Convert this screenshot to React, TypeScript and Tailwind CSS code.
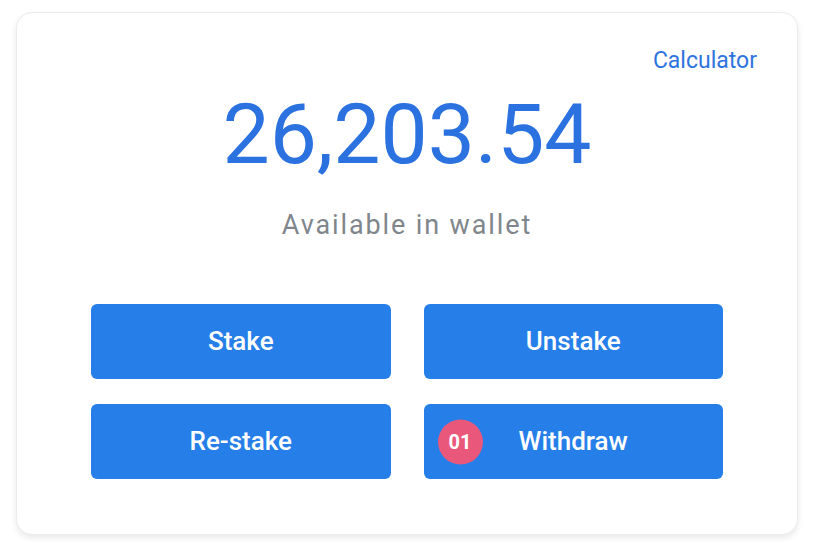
const actions = ["Stake", "Unstake", "Re-stake", "Withdraw"]

export default function App() {
  return (
    <div className="min-h-[551px] bg-white pt-3 px-4" style={{ fontFamily: "Roboto, 'Liberation Sans', sans-serif" }}>
      <div className="w-[782px] h-[523px] rounded-2xl border border-[#ececec] bg-white shadow-[0_3px_6px_rgba(0,0,0,0.09)]">
        <div className="pt-[36px] pr-[40px] text-right">
          <a href="#" className="text-[23px] leading-none text-[#2f74de]">Calculator</a>
        </div>

        <div className="mt-[18px] text-center text-[84px] leading-none text-[#2b72e0]">26,203.54</div>
        <div className="mt-[35px] text-center text-[27px] leading-none tracking-[0.07em] text-[#80868b]">
          Available in wallet
        </div>

        <div className="mt-[65px] mx-[74px] grid grid-cols-2 gap-x-[33px] gap-y-[25px]">
          {actions.map((label) => (
            <button
              key={label}
              className="relative h-[75px] rounded-md bg-[#267ee9] text-[26px] font-medium text-white flex items-center justify-center"
            >
              {label === "Withdraw" && (
                <span className="absolute left-[14px] top-1/2 -translate-y-1/2 w-[45px] h-[45px] rounded-full bg-[#e9587b] flex items-center justify-center text-[20px] font-bold">
                  01
                </span>
              )}
              {label}
            </button>
          ))}
        </div>
      </div>
    </div>
  )
}
